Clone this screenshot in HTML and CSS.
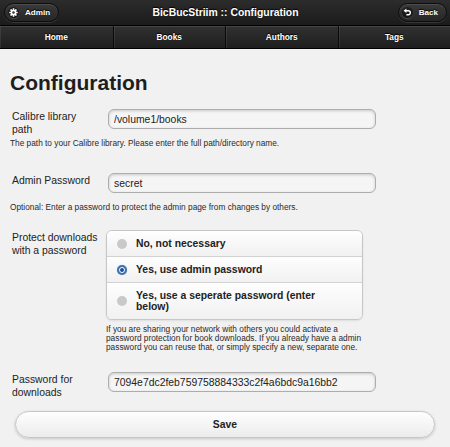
FILE: index.html
```html
<!DOCTYPE html>
<html lang="en">
<head>
<meta charset="utf-8">
<title>BicBucStriim :: Configuration</title>
<link rel="stylesheet" href="styles.css">
</head>
<body>
<header class="hdr">
  <a class="hbtn admin"><span class="ico"><svg width="9" height="9" viewBox="0 0 16 16"><g fill="#fff"><circle cx="8" cy="8" r="5"/><rect x="6.5" y="0.5" width="3" height="15" rx="0.5"/><rect x="0.5" y="6.5" width="15" height="3" rx="0.5"/><rect x="6.5" y="0.5" width="3" height="15" rx="0.5" transform="rotate(45 8 8)"/><rect x="6.5" y="0.5" width="3" height="15" rx="0.5" transform="rotate(-45 8 8)"/></g><circle cx="8" cy="8" r="2.2" fill="#333"/></svg></span>Admin</a>
  <h1 class="title">BicBucStriim :: Configuration</h1>
  <a class="hbtn back"><span class="ico"><svg width="9" height="9" viewBox="0 0 16 16"><path d="M5 5 H9.5 A3.5 3.5 0 0 1 9.5 12 H6" fill="none" stroke="#fff" stroke-width="2.6"/><path d="M1 5 L6 1 L6 9 Z" fill="#fff"/></svg></span>Back</a>
</header>
<nav class="navbar">
  <a>Home</a><a>Books</a><a>Authors</a><a>Tags</a>
</nav>
<main class="content">
  <h2 class="pagetitle">Configuration</h2>

  <div class="field f1">
    <label>Calibre library path</label>
    <input class="txt" type="text" value="/volume1/books">
  </div>
  <p class="help">The path to your Calibre library. Please enter the full path/directory name.</p>

  <div class="field f2">
    <label>Admin Password</label>
    <input class="txt" type="text" value="secret">
  </div>
  <p class="help">Optional: Enter a password to protect the admin page from changes by others.</p>

  <div class="field f3">
    <label>Protect downloads with a password</label>
    <div class="radios">
      <div class="ritem"><span class="rdot"></span>No, not necessary</div>
      <div class="ritem"><span class="rdot on"></span>Yes, use admin password</div>
      <div class="ritem"><span class="rdot"></span>Yes, use a seperate password (enter below)</div>
    </div>
  </div>
  <p class="help help3">If you are sharing your network with others you could activate a password protection for book downloads. If you already have a admin password you can reuse that, or simply specify a new, separate one.</p>

  <div class="field f4">
    <label>Password for downloads</label>
    <input class="txt" type="text" value="7094e7dc2feb759758884333c2f4a6bdc9a16bb2">
  </div>

  <button class="save">Save</button>
</main>
</body>
</html>
```

FILE: styles.css
```css
* { box-sizing: border-box; }
html, body { margin: 0; padding: 0; }
body {
  width: 450px;
  height: 447px;
  overflow: hidden;
  font-family: "Liberation Sans", Arial, sans-serif;
  background: #f1f1f1;
  color: #222;
}

.hdr {
  display: grid;
  grid-template-columns: 1fr auto 1fr;
  align-items: center;
  height: 26px;
  padding: 0 3px 0 4px;
  background: linear-gradient(#2c2c2c, #1b1b1b);
  border-bottom: 1px solid #000;
}
.title {
  margin: 0;
  font-size: 10.4px;
  font-weight: bold;
  color: #fff;
  text-shadow: 0 -1px 1px #000;
  white-space: nowrap;
}
.hbtn {
  display: inline-flex;
  align-items: center;
  gap: 6px;
  height: 19px;
  padding: 0 8px 0 3px;
  border-radius: 10px;
  border: 1px solid #0c0c0c;
  background: linear-gradient(#3a3a3a, #262626);
  box-shadow: 0 1px 0 rgba(255,255,255,.12), inset 0 1px 0 rgba(255,255,255,.1);
  color: #fff;
  font-size: 8.1px;
  font-weight: bold;
  text-shadow: 0 -1px 1px #000;
}
.admin { justify-self: start; }
.back { justify-self: end; }
.ico {
  width: 11px;
  height: 11px;
  border-radius: 50%;
  background: rgba(0,0,0,.45);
  box-shadow: 0 1px 0 rgba(255,255,255,.15);
  display: flex;
  align-items: center;
  justify-content: center;
}
.ico svg { display: block; }

.navbar {
  display: grid;
  grid-template-columns: repeat(4, 1fr);
  height: 23px;
  border-bottom: 1px solid #000;
  background: #1c1c1c;
}
.navbar a {
  display: flex;
  align-items: center;
  justify-content: center;
  background: linear-gradient(#313131, #1e1e1e);
  border-left: 1px solid #0a0a0a;
  box-shadow: inset 1px 0 0 rgba(255,255,255,.08), inset 0 1px 0 rgba(255,255,255,.1);
  color: #fff;
  font-size: 8.3px;
  font-weight: bold;
  text-shadow: 0 -1px 1px #000;
}
.navbar a:first-child { border-left: none; }

.content { padding: 0 10px; }
.pagetitle {
  margin: 22px 0 0;
  font-size: 21px;
  line-height: 24px;
  font-weight: bold;
  color: #1e1e1e;
}

.field {
  display: grid;
  grid-template-columns: 86px 268px;
  column-gap: 10px;
  align-items: start;
  height: 20px;
  margin-left: 2px;
}
.field label {
  padding-top: 1px;
  font-size: 10.4px;
  line-height: 13px;
  color: #222;
}
.txt {
  width: 268px;
  height: 20px;
  margin: 0;
  padding: 0 5px;
  border: 1px solid #adadad;
  border-radius: 6px;
  background: #f5f5f5;
  box-shadow: inset 0 1px 3px rgba(0,0,0,.18);
  font-family: "Liberation Sans", Arial, sans-serif;
  font-size: 10.4px;
  color: #222;
  outline: none;
}
.f1 { margin-top: 14px; }
.f2 { margin-top: 25.5px; }
.f3 { margin-top: 18.5px; height: auto; }
.f4 { margin-top: 20.5px; }

.help {
  margin: 9.5px 0 0;
  font-size: 8.3px;
  line-height: 9px;
  color: #2a2a2a;
}
.help3 {
  margin: 4.5px 0 0 96px;
  width: 258px;
}

.radios {
  margin-left: -2px;
  width: 257px;
  border: 1px solid #c6c6c6;
  border-radius: 6px;
  background: #fff;
  box-shadow: 0 1px 2px rgba(0,0,0,.08);
  overflow: hidden;
}
.ritem {
  position: relative;
  padding: 7px 20px 7px 29px;
  font-size: 10.4px;
  line-height: 11px;
  font-weight: bold;
  color: #222;
  background: linear-gradient(#fefefe, #f1f1f1);
  border-top: 1px solid #d2d2d2;
}
.ritem:first-child { border-top: none; }
.rdot {
  position: absolute;
  left: 10px;
  top: 50%;
  width: 10px;
  height: 10px;
  margin-top: -5px;
  border-radius: 50%;
  background: #c9c9c9;
}
.rdot.on {
  background: #3a75b8;
  box-shadow: 0 0 1px rgba(0,0,0,.3);
}
.rdot.on::after {
  content: "";
  position: absolute;
  left: 2px;
  top: 2px;
  width: 6px;
  height: 6px;
  border-radius: 50%;
  border: 1.5px solid #fff;
  box-sizing: border-box;
  background: #1f4f8a;
}

.save {
  display: block;
  width: 420px;
  height: 27px;
  margin: 19px 0 0 5px;
  border: 1px solid #c6c6c6;
  border-radius: 14px;
  background: linear-gradient(#fefefe, #ececec);
  box-shadow: 0 1px 3px rgba(0,0,0,.18);
  font-family: "Liberation Sans", Arial, sans-serif;
  font-size: 10.4px;
  font-weight: bold;
  color: #222;
}
```
